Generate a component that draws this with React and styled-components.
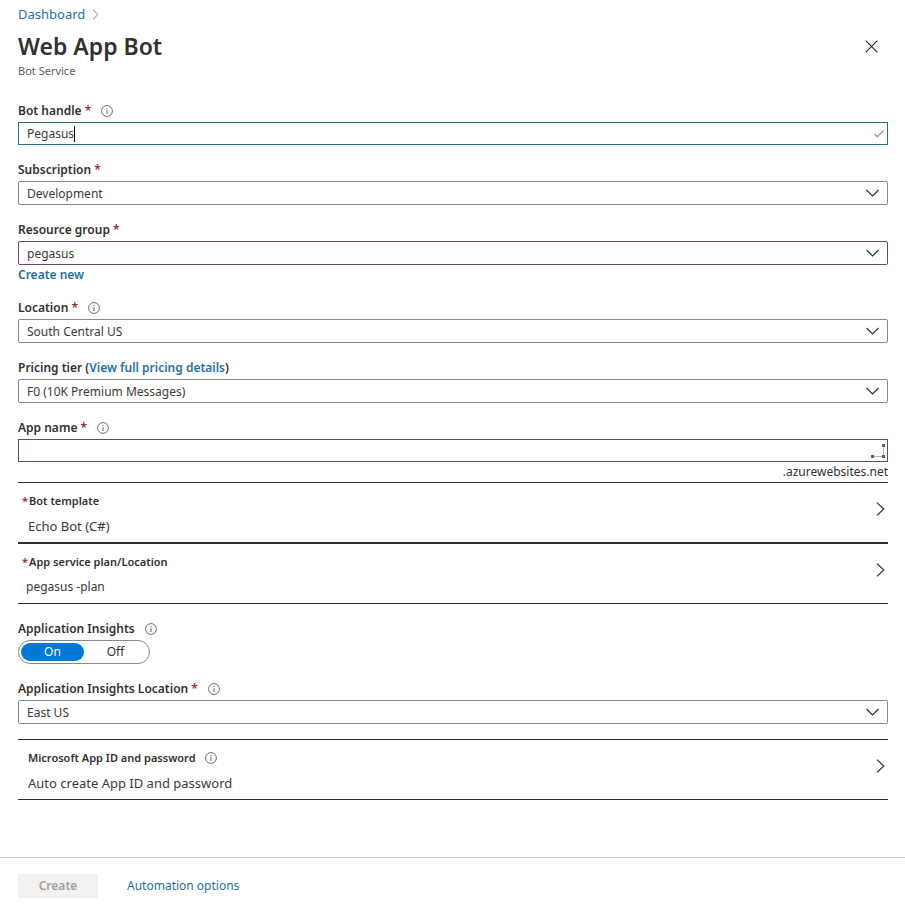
import React, { useState } from "react";
import styled, { createGlobalStyle } from "styled-components";

const color = {
  text: "#323130",
  value: "#3b3a39",
  muted: "#605e5c",
  link: "#1f6fa8",
  required: "#a4262c",
  border: "#8a8886",
  edited: "#6b4277",
  focus: "#2b7189",
  line: "#2f2e2d",
  accent: "#0078d4",
};

const GlobalStyle = createGlobalStyle`
  *, *::before, *::after { box-sizing: border-box; }
  body {
    margin: 0;
    background: #fff;
    color: ${color.text};
    font-family: "Noto Sans", "Open Sans", sans-serif;
    font-size: 12px;
  }
  button, input, select { font: inherit; color: inherit; margin: 0; }
`;

const Page = styled.div`
  min-height: 100vh;
  display: flex;
  flex-direction: column;
`;

const Header = styled.header`
  display: flex;
  flex-direction: column;
  padding: 4px 17px 0 18px;
`;

const Breadcrumb = styled.nav`
  display: flex;
  align-items: center;
  gap: 7px;
  font-size: 13px;
  line-height: 20px;
`;

const Link = styled.a`
  color: ${color.link};
  text-decoration: none;
`;

const TitleRow = styled.div`
  display: flex;
  align-items: center;
  justify-content: space-between;
  padding-top: 6px;
  padding-right: 10px;
`;

const Title = styled.h1`
  margin: 0;
  font-size: 23px;
  line-height: 32px;
  font-weight: 600;
`;

const IconButton = styled.button`
  display: flex;
  padding: 0;
  border: 0;
  background: none;
`;

const Subtitle = styled.div`
  color: ${color.muted};
  font-size: 11px;
  line-height: 17px;
`;

const Main = styled.main`
  flex: 1;
  padding: 22px 17px 0 18px;
`;

const Stack = styled.div`
  display: flex;
  flex-direction: column;
  gap: 15px;
  padding-bottom: ${(p) => (p.$last ? "15px" : "0")};
  padding-top: ${(p) => (p.$last ? "15px" : "0")};
`;

const Field = styled.div`
  display: flex;
  flex-direction: column;
`;

const LabelRow = styled.div`
  display: flex;
  align-items: center;
  gap: 10px;
  font-size: 12px;
  line-height: 20px;
  height: 21px;
  padding-bottom: 1px;
  font-weight: 600;
`;

const Star = styled.span`
  color: ${color.required};
`;

const SelectShell = styled.div`
  display: grid;
  align-items: center;
  > * { grid-area: 1 / 1; }
  > svg { justify-self: end; margin-right: 9px; pointer-events: none; }
`;

const Select = styled.select`
  appearance: none;
  width: 100%;
  height: 24px;
  padding: 0 32px 0 8px;
  border: 1px solid ${(p) => (p.$edited ? color.edited : color.border)};
  border-radius: 2px;
  background: #fff;
  color: ${color.value};
  font-size: 12px;
`;

const InputShell = styled.div`
  display: flex;
  align-items: center;
  height: 23px;
  padding: 0 2px 0 8px;
  border: 1px solid ${(p) => (p.$focused ? color.focus : color.edited)};
`;

const TextInput = styled.input`
  ${(p) => (p.$fit ? "field-sizing: content;" : "flex: 1;")}
  min-width: 0;
  height: 20px;
  padding: 0;
  border: 0;
  outline: 0;
  background: none;
  color: ${color.value};
  caret-color: transparent;
`;

const Caret = styled.span`
  width: 1px;
  height: 16px;
  margin-right: auto;
  background: #000;
`;

const LinkLine = styled.div`
  height: 18px;
  line-height: 20px;
  font-weight: 600;
`;

const Suffix = styled.div`
  text-align: right;
  line-height: 20px;
`;

const Picker = styled.button`
  display: flex;
  align-items: flex-start;
  justify-content: space-between;
  width: 100%;
  height: 61px;
  padding: 8px 3px 0 4px;
  border: solid ${color.line};
  border-width: 1px 0;
  background: none;
  text-align: left;
`;

const PickerText = styled.span`
  display: flex;
  flex-direction: column;
  gap: 5px;
  padding-left: ${(p) => (p.$inset ? "6px" : "0")};
`;

const PickerLabel = styled.span`
  display: flex;
  align-items: center;
  gap: ${(p) => (p.$spaced ? "9px" : "1px")};
  font-size: 11px;
  line-height: 20px;
  font-weight: 600;
`;

const PickerValue = styled.span`
  padding-left: ${(p) => p.$indent || 0}px;
  color: ${color.value};
  font-size: ${(p) => (p.$large ? 13 : 12)}px;
  line-height: 20px;
`;

const PickerArrow = styled.span`
  display: flex;
  padding-top: 11px;
`;

const Toggle = styled.div`
  display: flex;
  align-self: flex-start;
  width: 132px;
  height: 24px;
  padding: 2px;
  border: 1px solid ${color.border};
  border-radius: 12px;
`;

const Option = styled.label`
  flex: 1;
  border-radius: 9px;
  line-height: 18px;
  text-align: center;
  background: ${(p) => (p.$on ? color.accent : "transparent")};
  color: ${(p) => (p.$on ? "#fff" : color.text)};
`;

const HiddenRadio = styled.input`
  position: absolute;
  opacity: 0;
`;

const Footer = styled.footer`
  display: flex;
  align-items: center;
  gap: 29px;
  padding: 16px 18px 10px;
  border-top: 1px solid #c8c8c8;
  line-height: 24px;
`;

const CreateButton = styled.button`
  width: 80px;
  height: 24px;
  padding: 0;
  border: 0;
  background: #f3f2f1;
  font-weight: 600;
  &:disabled { color: #a19f9d; }
`;

const Stroke = ({ w, h, d, stroke = color.text, width = 1.2 }) => (
  <svg width={w} height={h} viewBox={`0 0 ${w} ${h}`} fill="none" stroke={stroke} strokeWidth={width} aria-hidden="true">
    <path d={d} />
  </svg>
);

const ChevronDown = () => <Stroke w={13} h={8} d="M.5 1l6 6 6-6" />;
const ChevronRight = () => <Stroke w={9} h={14} d="M1 .6L7.8 7 1 13.4" />;

const Info = () => (
  <svg width="12" height="12" viewBox="0 0 12 12" fill="none" stroke="#605e5c" aria-hidden="true">
    <circle cx="6" cy="6" r="5.4" strokeWidth=".9" />
    <path d="M6 5.2V9M6 3v1.1" />
  </svg>
);

const Resizer = () => (
  <svg width="14" height="16" viewBox="0 0 14 16" aria-hidden="true">
    <path d="M2 13.5h10.500V2" fill="none" stroke="#b5b3c0" />
    <path d="M0 12h3v3H0zM11 12h3v3h-3zM11 1h3v3h-3z" fill="#5f5b73" />
  </svg>
);

function Label({ id, children, required, info }) {
  return (
    <LabelRow>
      <label htmlFor={id}>
        {children}
        {required && <Star> *</Star>}
      </label>
      {info && <Info />}
    </LabelRow>
  );
}

function Dropdown({ id, value, edited }) {
  return (
    <SelectShell>
      <Select id={id} $edited={edited} defaultValue={value}>
        <option>{value}</option>
      </Select>
      <ChevronDown />
    </SelectShell>
  );
}

export default function App() {
  const [handle, setHandle] = useState("Pegasus");
  const [insights, setInsights] = useState("On");
  return (
    <Page>
      <GlobalStyle />
      <Header>
        <Breadcrumb>
          <Link href="#dashboard">Dashboard</Link>
          <Stroke w={7} h={11} d="M1 .8l5 4.700-5 4.700" stroke="#8a8886" width={1} />
        </Breadcrumb>
        <TitleRow>
          <Title>Web App Bot</Title>
          <IconButton type="button" aria-label="Close">
            <Stroke w={13} h={13} d="M.7.7l11.600 11.600M12.300.7L.7 12.300" />
          </IconButton>
        </TitleRow>
        <Subtitle>Bot Service</Subtitle>
      </Header>
      <Main>
        <Stack>
          <Field>
            <Label id="handle" required info>Bot handle</Label>
            <InputShell $focused>
              <TextInput id="handle" $fit value={handle} onChange={(e) => setHandle(e.target.value)} />
              <Caret />
              <Stroke w={12} h={9} d="M1.500 5l2.800 2.700L10.500 1.500" stroke="#6fa85a" />
            </InputShell>
          </Field>
          <Field>
            <Label id="subscription" required>Subscription</Label>
            <Dropdown id="subscription" value="Development" />
          </Field>
          <Field>
            <Label id="group" required>Resource group</Label>
            <Dropdown id="group" value="pegasus" edited />
            <LinkLine><Link href="#new">Create new</Link></LinkLine>
          </Field>
          <Field>
            <Label id="location" required info>Location</Label>
            <Dropdown id="location" value="South Central US" />
          </Field>
          <Field>
            <LabelRow>
              <span>
                <label htmlFor="tier">Pricing tier</label> (<Link href="#pricing">View full pricing details</Link>)
              </span>
            </LabelRow>
            <Dropdown id="tier" value="F0 (10K Premium Messages)" />
          </Field>
          <Field>
            <Label id="app" required info>App name</Label>
            <InputShell>
              <TextInput id="app" />
              <Resizer />
            </InputShell>
            <Suffix>.azurewebsites.net</Suffix>
          </Field>
        </Stack>
        <Picker type="button">
          <PickerText>
            <PickerLabel><Star>*</Star>Bot template</PickerLabel>
            <PickerValue $large $indent={6}>Echo Bot (C#)</PickerValue>
          </PickerText>
          <PickerArrow><ChevronRight /></PickerArrow>
        </Picker>
        <Picker type="button">
          <PickerText>
            <PickerLabel><Star>*</Star>App service plan/Location</PickerLabel>
            <PickerValue $indent={4}>pegasus -plan</PickerValue>
          </PickerText>
          <PickerArrow><ChevronRight /></PickerArrow>
        </Picker>
        <Stack $last>
          <Field>
            <LabelRow>
              <span id="insights">Application Insights</span>
              <Info />
            </LabelRow>
            <Toggle role="radiogroup" aria-labelledby="insights">
              {["On", "Off"].map((name) => (
                <Option key={name} $on={insights === name}>
                  <HiddenRadio type="radio" name="insights" checked={insights === name} onChange={() => setInsights(name)} />
                  {name}
                </Option>
              ))}
            </Toggle>
          </Field>
          <Field>
            <Label id="insightsLocation" required info>Application Insights Location</Label>
            <Dropdown id="insightsLocation" value="East US" />
          </Field>
        </Stack>
        <Picker type="button">
          <PickerText $inset>
            <PickerLabel $spaced>Microsoft App ID and password <Info /></PickerLabel>
            <PickerValue $large>Auto create App ID and password</PickerValue>
          </PickerText>
          <PickerArrow><ChevronRight /></PickerArrow>
        </Picker>
      </Main>
      <Footer>
        <CreateButton type="button" disabled>Create</CreateButton>
        <Link href="#automation">Automation options</Link>
      </Footer>
    </Page>
  );
}
